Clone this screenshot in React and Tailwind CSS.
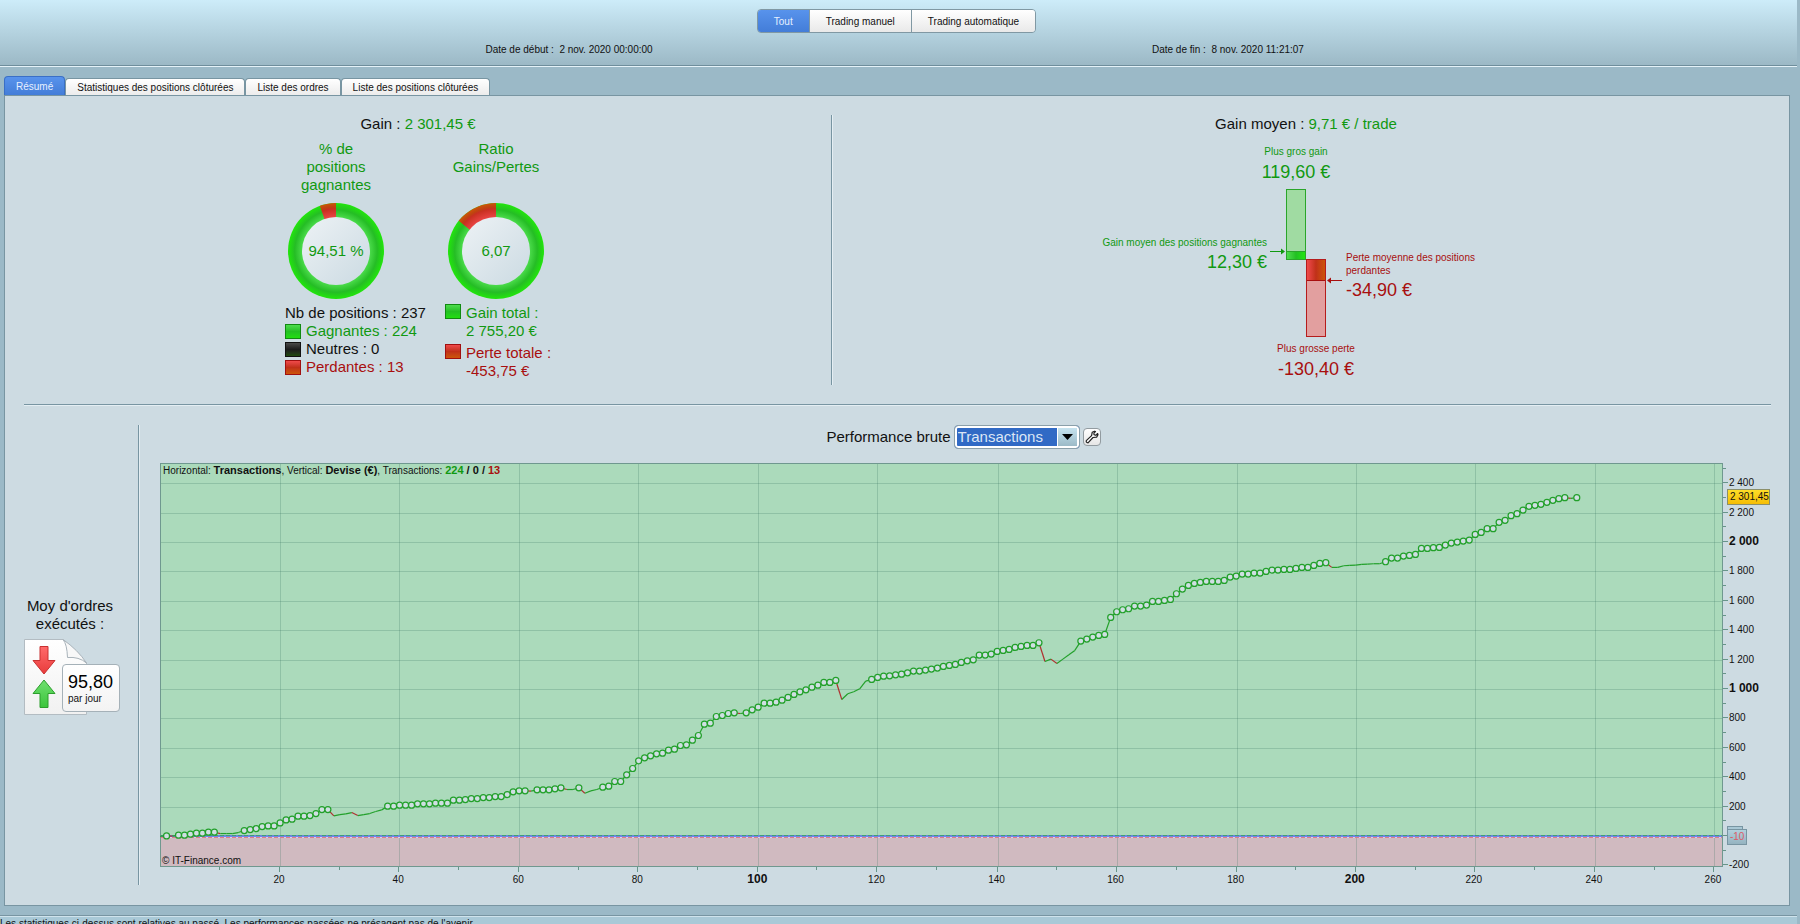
import { useState } from "react";
import clsx from "clsx";

// height of the equity curve after each transaction, in thirds of a pixel
const curve = [
  1, 0, 3, 3, 6, 9, 9, 12, 12, 8, 8, 8, 11, 17, 20, 23, 29, 31, 31, 40, 49, 51,
  60, 60, 62, 68, 80, 80, 61, 65, 67, 71, 62, 65, 68, 74, 79, 90, 90, 93, 93,
  93, 97, 97, 97, 99, 99, 99, 108, 108, 110, 113, 113, 116, 116, 119, 119, 125,
  133, 136, 136, 135, 139, 139, 139, 142, 145, 140, 140, 145, 129, 136, 140,
  147, 150, 164, 164, 184, 203, 226, 235, 241, 247, 249, 258, 261, 272, 274,
  288, 302, 336, 339, 359, 362, 368, 370, 368, 370, 379, 387, 399, 399, 402,
  408, 416, 425, 433, 439, 447, 453, 461, 461, 467, 410, 427, 433, 442, 465,
  470, 476, 480, 481, 484, 486, 490, 495, 495, 498, 501, 504, 509, 512, 515,
  521, 526, 529, 543, 543, 546, 554, 557, 560, 566, 569, 572, 572, 580, 524,
  531, 518, 531, 544, 557, 585, 591, 597, 602, 605, 656, 673, 679, 682, 690,
  690, 693, 704, 704, 707, 710, 727, 741, 752, 758, 761, 764, 764, 764, 767,
  777, 780, 786, 786, 789, 789, 794, 798, 798, 800, 800, 803, 806, 806, 812,
  818, 820, 806, 806, 811, 812, 813, 815, 816, 817, 817, 823, 834, 834, 840,
  842, 845, 863, 863, 865, 866, 873, 879, 882, 885, 888, 905, 911, 922, 922,
  941, 947, 961, 967, 978, 989, 992, 995, 1001, 1007, 1012, 1015, 1013, 1015,
];
// drawdowns: the curve is below its last high, no marker there
const drawdowns = [
  [2, 2],
  [10, 13],
  [29, 37],
  [62, 62],
  [68, 69],
  [71, 73],
  [97, 97],
  [114, 118],
  [148, 153],
  [196, 204],
  [236, 236],
];
const isHigh = (n) => !drawdowns.some(([a, b]) => n >= a && n <= b);

const plot = { left: 10, top: 3, right: 1572, bottom: 407, zero: 376 };
const px = (n) => 130 + (n - 20) * 5.972;
const py = (v) => plot.zero - v * 0.147;
const points = curve.map((h, i) => ({
  n: i + 1,
  x: px(i + 1),
  y: plot.zero - h / 3,
}));
const format = (v) => String(v).replace(/(\d)(\d{3})$/, "$1 $2");

const tabs = [
  "Résumé",
  "Statistiques des positions clôturées",
  "Liste des ordres",
  "Liste des positions clôturées",
];

export default function App() {
  return (
    <div className="flex flex-col h-screen overflow-hidden bg-[#9bb9c7] font-['Liberation_Sans',Arial,sans-serif] text-[10px] text-[#111]">
      <Header />
      <main className="flex flex-col pl-1 pr-[10px] pt-[9px]">
        <Tabs />
        <section className="border border-[#7895a2] bg-[#cddbe2] pb-5">
          <div className="flex pt-[19px]">
            <Gains />
            <div className="border-l border-[#7895a2] w-0.5 bg-[#e4eef3]"></div>
            <Average />
          </div>
          <hr className="mt-[19px] ml-[19px] mr-[18px] border-[#7895a2] shadow-[0_1px_0_#e4eef3]" />
          <div className="flex pt-5">
            <Orders />
            <div className="border-l border-[#7895a2] w-0.5 bg-[#e4eef3]"></div>
            <Performance />
          </div>
        </section>
      </main>
      <footer className="mt-[9px] mr-[3px] border-t border-[#7895a2] shadow-[inset_0_1px_0_#cfe3ec] bg-[#a9c9d7] pt-px whitespace-nowrap leading-[14px]">
        Les statistiques ci-dessus sont relatives au passé. Les performances
        passées ne présagent pas de l'avenir.
      </footer>
    </div>
  );
}

const Header = () => {
  const [mode, setMode] = useState("Tout");
  return (
    <header className="mr-[3px] pt-[9px] h-[67px] shrink-0 bg-linear-to-b from-[#cdecf9] to-[#9bb8c5] border-b border-[#e4f2f8] shadow-[inset_0_-1px_0_#6f8e9c]">
      <div className="flex justify-center pr-1">
        <div className="flex h-6 rounded-sm border border-[#8098a3] overflow-hidden">
          {["Tout", "Trading manuel", "Trading automatique"].map((item) => (
            <button
              key={item}
              className={clsx(
                "px-4 border-l border-[#8098a3] first:border-l-0",
                mode == item
                  ? "bg-linear-to-b from-[#5893ec] to-[#437dd8] text-[#e6f0ff]"
                  : "bg-linear-to-b from-white to-[#e9e9e9]",
              )}
              onClick={() => setMode(item)}
            >
              {item}
            </button>
          ))}
        </div>
      </div>
      <div className="grid grid-cols-2 w-11/15 mx-auto mt-[9px] text-center leading-4">
        <p>Date de début :&nbsp; 2 nov. 2020 00:00:00</p>
        <p>Date de fin :&nbsp; 8 nov. 2020 11:21:07</p>
      </div>
    </header>
  );
};

const Tabs = () => {
  const [tab, setTab] = useState(tabs[0]);
  return (
    <nav className="flex items-end">
      {tabs.map((item) => (
        <button
          key={item}
          className={clsx(
            "px-[11px] rounded-t-sm border border-b-0",
            tab == item
              ? "h-[19px] border-[#3a6fc6] bg-linear-to-b from-[#5893ec] to-[#437dd8] text-[#e6f0ff]"
              : "h-[17px] border-[#7895a2] bg-linear-to-b from-white to-[#ececec]",
          )}
          onClick={() => setTab(item)}
        >
          {item}
        </button>
      ))}
    </nav>
  );
};

const Swatch = ({ color }) => (
  <span
    className={clsx(
      "w-4 h-[15px] shrink-0 border",
      color == "green" &&
        "border-[#118a11] bg-linear-to-b from-[#4ddc4d] via-[#22c022] to-[#22dd10]",
      color == "black" &&
        "border-[#111] bg-linear-to-b from-[#4a4a4a] via-[#1c1c1c] to-[#1f4a0c]",
      color == "red" &&
        "border-[#a01010] bg-linear-to-b from-[#f04a4a] via-[#c03018] to-[#cc5508]",
    )}
  ></span>
);

const Donut = ({ id, loss, label }) => {
  const angle = loss * 2 * Math.PI;
  const x = 49 - 60 * Math.sin(angle);
  const y = 49 - 60 * Math.cos(angle);
  return (
    <svg width="98" height="98" viewBox="0 0 98 98">
      <defs>
        <radialGradient id={`${id}-win`} gradientUnits="userSpaceOnUse" cx="49" cy="49" r="48">
          <stop offset="0.7" stopColor="#4cdc4c" />
          <stop offset="0.86" stopColor="#25bd25" />
          <stop offset="1" stopColor="#22e60c" />
        </radialGradient>
        <radialGradient id={`${id}-loss`} gradientUnits="userSpaceOnUse" cx="49" cy="49" r="48">
          <stop offset="0.7" stopColor="#ea4545" />
          <stop offset="0.88" stopColor="#c83020" />
          <stop offset="0.92" stopColor="#bf4210" />
          <stop offset="1" stopColor="#cc5508" />
        </radialGradient>
        <linearGradient id={`${id}-hole`} x1="0" y1="0" x2="1" y2="1">
          <stop offset="0" stopColor="#edf2f5" />
          <stop offset="1" stopColor="#cbdae2" />
        </linearGradient>
        <clipPath id={`${id}-clip`}>
          <path d={`M49 49V-11L${x} ${y}Z`} />
        </clipPath>
      </defs>
      <circle cx="49" cy="49" r="48" fill={`url(#${id}-win)`} />
      <circle cx="49" cy="49" r="48" fill={`url(#${id}-loss)`} clipPath={`url(#${id}-clip)`} />
      <circle cx="49" cy="49" r="34" fill={`url(#${id}-hole)`} />
      <text x="49" y="54" textAnchor="middle" fontSize="15" fill="#119911">
        {label}
      </text>
    </svg>
  );
};

const Gains = () => (
  <article className="w-[826px] shrink flex flex-col items-center text-[15px] leading-[18px]">
    <h2>
      Gain : <span className="text-[#119911]">2 301,45 €</span>
    </h2>
    <div className="flex mt-[7px] pr-1">
      <div className="w-40 flex flex-col items-center">
        <h3 className="h-[62px] w-20 text-center text-[#119911]">
          % de positions gagnantes
        </h3>
        <Donut id="positions" loss={0.0549} label="94,51 %" />
        <ul className="mt-1 ml-[58px] w-40 whitespace-nowrap">
          <li>Nb de positions : 237</li>
          <li className="flex items-center gap-[5px] text-[#119911]">
            <Swatch color="green" /> Gagnantes : 224
          </li>
          <li className="flex items-center gap-[5px]">
            <Swatch color="black" /> Neutres : 0
          </li>
          <li className="flex items-center gap-[5px] text-[#a80f0f]">
            <Swatch color="red" /> Perdantes : 13
          </li>
        </ul>
      </div>
      <div className="w-40 flex flex-col items-center">
        <h3 className="h-[62px] text-center text-[#119911]">
          Ratio
          <br />
          Gains/Pertes
        </h3>
        <Donut id="ratio" loss={0.1415} label="6,07" />
        <ul className="mt-1 ml-[58px] w-40 space-y-1">
          <li className="flex gap-[5px] text-[#119911]">
            <Swatch color="green" />
            <span>
              Gain total :<br />2 755,20 €
            </span>
          </li>
          <li className="flex gap-[5px] text-[#a80f0f]">
            <Swatch color="red" />
            <span>
              Perte totale :<br />
              -453,75 €
            </span>
          </li>
        </ul>
      </div>
    </div>
  </article>
);

const Average = () => (
  <article className="flex-1 flex flex-col items-center pr-[10px] pb-[3px]">
    <h2 className="text-[15px] leading-[18px]">
      Gain moyen : <span className="text-[#119911]">9,71 € / trade</span>
    </h2>
    <div className="grid grid-cols-[1fr_20px_20px_1fr] mt-3 whitespace-nowrap">
      <div className="flex justify-end gap-[3px] pt-[91px] text-right text-[#119911]">
        <div>
          <p className="leading-[14px]">Gain moyen des positions gagnantes</p>
          <p className="text-lg leading-6">12,30 €</p>
        </div>
        <svg width="15" height="7" viewBox="0 0 15 7" className="mt-3 mr-px">
          <path d="M0 3.5H12" stroke="#119911" />
          <path d="M11 0.5L15 3.5L11 6.5Z" fill="#119911" />
        </svg>
      </div>
      <div className="flex flex-col items-center text-[#119911]">
        <p className="leading-[14px]">Plus gros gain</p>
        <p className="text-lg leading-[26px] mb-1">119,60 €</p>
        <div className="w-5 h-[71px] flex flex-col border border-[#2aa52a] bg-[#a0dba2]">
          <div className="h-2 mt-auto border-t border-[#2aa52a] bg-linear-to-r from-[#4ddc4d] via-[#22c022] to-[#22e60c]"></div>
        </div>
      </div>
      <div className="flex flex-col items-center pt-[114px] text-[#a80f0f]">
        <div className="w-5 h-[78px] border border-[#b51c1c] bg-[#e29f9f]">
          <div className="h-[21px] border-b border-[#a80f0f] bg-linear-to-r from-[#f04a4a] via-[#c03018] to-[#cc5508]"></div>
        </div>
        <p className="leading-[14px] mt-[5px]">Plus grosse perte</p>
        <p className="text-lg leading-[26px]">-130,40 €</p>
      </div>
      <div className="flex gap-1 pt-[106px] text-[#a80f0f]">
        <svg width="15" height="7" viewBox="0 0 15 7" className="mt-[26px] ml-px">
          <path d="M3 3.5H15" stroke="#a80f0f" />
          <path d="M4 0.5L0 3.5L4 6.5Z" fill="#a80f0f" />
        </svg>
        <div>
          <p className="leading-[13px]">
            Perte moyenne des positions
            <br />
            perdantes
          </p>
          <p className="text-lg leading-[26px]">-34,90 €</p>
        </div>
      </div>
    </div>
  </article>
);

const Orders = () => (
  <article className="w-[133px] shrink-0 flex flex-col justify-center pl-[19px] pb-[38px] pt-10">
    <h2 className="w-[92px] text-center text-[15px] leading-[18px]">
      Moy d'ordres exécutés :
    </h2>
    <div className="relative mt-[6px] h-[76px]">
      <svg width="64" height="76" viewBox="0 0 64 76">
        <defs>
          <linearGradient id="sheet" x1="0" y1="0" x2="0" y2="1">
            <stop offset="0" stopColor="#ffffff" />
            <stop offset="1" stopColor="#f1f1f1" />
          </linearGradient>
          <linearGradient id="down" x1="0" y1="0" x2="0" y2="1">
            <stop offset="0" stopColor="#ff6a6a" />
            <stop offset="1" stopColor="#e83c3c" />
          </linearGradient>
          <linearGradient id="up" x1="0" y1="0" x2="0" y2="1">
            <stop offset="0" stopColor="#6fe06f" />
            <stop offset="1" stopColor="#3cc43c" />
          </linearGradient>
        </defs>
        <path d="M0.5 0.5H39L62.5 24V75.5H0.5Z" fill="url(#sheet)" stroke="#b3bcc2" />
        <path d="M39 0.5Q43 5 43.5 18.5Q55 17.5 62.5 24Q54 11 39 0.5Z" fill="#f8f8f8" stroke="#a9b3ba" />
        <path d="M16 7.5H24V21.5H31L20 35L9 21.5H16Z" fill="url(#down)" stroke="#c93030" />
        <path d="M20 41L31 54.5H24V68.5H16V54.5H9Z" fill="url(#up)" stroke="#2d9e2d" />
      </svg>
      <div className="absolute left-[38px] top-[25px] w-[58px] h-12 pl-[5px] pt-2 rounded-sm border border-[#a5b1b8] bg-linear-to-b from-white to-[#f3f3f3]">
        <p className="text-lg leading-[18px] text-black">95,80</p>
        <p className="leading-4">par jour</p>
      </div>
    </div>
  </article>
);

const Performance = () => (
  <article className="flex-1 min-w-0 pl-[10px] pr-2">
    <div className="flex items-center justify-center pr-1 h-6 gap-[3px]">
      <label htmlFor="unit" className="text-[15px]">
        Performance brute
      </label>
      <div className="relative flex">
        <select
          id="unit"
          className="appearance-none w-[126px] h-6 rounded-sm border border-[#8ba0aa] bg-[#316ac5] text-[15px] leading-[18px] pl-[3px] text-[#dce6f5] outline-none shadow-[inset_0_0_0_2px_white]"
        >
          <option>Transactions</option>
          <option>Jours</option>
        </select>
        <span className="pointer-events-none absolute right-[3px] top-[3px] w-5 h-[18px] flex items-center justify-center border-l border-white bg-linear-to-b from-[#c6e3ef] to-[#9cbac7]">
          <svg width="11" height="6" viewBox="0 0 11 6">
            <path d="M0 0H11L5.5 6Z" fill="#000" />
          </svg>
        </span>
      </div>
      <button
        aria-label="Configurer"
        className="w-[18px] h-[18px] flex items-center justify-center rounded-sm border border-[#929ba0] bg-linear-to-b from-white to-[#e6e6e6]"
      >
        <svg width="14" height="14" viewBox="0 0 14 14">
          <path
            d="M9.5 1.2L7.2 2.3L6.6 5.6L1.3 10.6Q0.8 12.7 3 12.8L8 7.5L11.6 7.2L13 4.6L12.6 3.5L10.8 5.3L9 4.6L8.9 3.2L10.5 1.6Z"
            fill="#fff"
            stroke="#222"
            strokeWidth="1.2"
            strokeLinejoin="round"
          />
        </svg>
      </button>
    </div>
    <Chart />
  </article>
);

const Chart = () => {
  const { left, top, right, bottom, zero } = plot;
  const columns = Array.from({ length: 13 }, (_, i) => (i + 1) * 20);
  const rows = Array.from({ length: 14 }, (_, i) => i * 200 - 200);
  return (
    <svg viewBox="0 0 1630 425" className="block w-full h-auto mt-[11px]" fontSize="10" fill="#111">
      <defs>
        <linearGradient id="price" x1="0" y1="0" x2="0" y2="1">
          <stop offset="0" stopColor="#ffe02a" />
          <stop offset="1" stopColor="#f5bd05" />
        </linearGradient>
        <linearGradient id="cursor" x1="0" y1="0" x2="0" y2="1">
          <stop offset="0" stopColor="#b4d2de" />
          <stop offset="1" stopColor="#94b3c0" />
        </linearGradient>
      </defs>
      <g shapeRendering="crispEdges">
        <rect x={left} y={top} width={right - left} height={zero - top} fill="#abdabb" />
        <rect x={left} y={zero} width={right - left} height={bottom - zero} fill="#d0bac0" />
        {columns.map((n) => (
          <g key={n} stroke="#3c7864">
            <path d={`M${Math.round(px(n)) + 0.5} ${top}V${bottom}`} strokeOpacity="0.25" />
            <path d={`M${Math.round(px(n)) - 0.5} ${bottom}v5`} strokeOpacity="0.7" />
            <path d={`M${Math.round(px(n - 10)) - 0.5} ${bottom}v3`} strokeOpacity="0.7" />
          </g>
        ))}
        {rows.map((v) => (
          <g key={v} stroke="#3c7864">
            {v > 0 && (
              <path d={`M${left} ${Math.round(py(v)) + 0.5}H${right}`} strokeOpacity="0.25" />
            )}
            <path d={`M${right} ${Math.round(py(v)) - 0.5}h5`} strokeOpacity="0.7" />
            <path d={`M${right} ${Math.round(py(v + 100)) - 0.5}h3`} strokeOpacity="0.7" />
          </g>
        ))}
        <path d={`M${left} ${zero + 0.5}H${right}`} stroke="#7088e6" />
        <path d={`M${left} ${zero - 0.5}H${right}`} stroke="#6a80e0" />
        <path d={`M${left} ${zero - 0.5}H${right}`} stroke="#3f9f78" strokeDasharray="4 2" />
        <path d={`M${left} ${zero + 1.5}H${right}`} stroke="#d3d3ee" />
        <path d={`M${left} ${zero + 1.5}H${right}`} stroke="#e07c88" strokeDasharray="4 2" />
        <rect x={left + 0.5} y={top + 0.5} width={right - left - 1} height={bottom - top - 1} fill="none" stroke="#6f988f" />
      </g>

      {points.slice(1).map((p, i) => (
        <path
          key={p.n}
          d={`M${points[i].x} ${points[i].y}L${p.x} ${p.y}`}
          stroke={p.y > points[i].y ? "#b03030" : "#22a02a"}
          strokeWidth="1.2"
        />
      ))}
      <path d={`M${left} ${zero}H${px(1)}`} stroke="#22a02a" />
      {points
        .filter((p) => isHigh(p.n))
        .map((p) => (
          <circle key={p.n} cx={p.x} cy={p.y} r="3" fill="#cfdfe2" stroke="#22a02a" strokeWidth="1.2" />
        ))}

      <text x="13" y="14">
        Horizontal: <tspan fontWeight="bold" fontSize="11">Transactions</tspan>, Vertical:{" "}
        <tspan fontWeight="bold" fontSize="11">Devise (€)</tspan>, Transactions:{" "}
        <tspan fontWeight="bold" fontSize="11" fill="#119911">224</tspan>
        <tspan fontWeight="bold" fontSize="11"> / 0 / </tspan>
        <tspan fontWeight="bold" fontSize="11" fill="#a80f0f">13</tspan>
      </text>
      <text x="12" y="404">© IT-Finance.com</text>

      {columns.map((n) => (
        <text
          key={n}
          x={Math.round(px(n)) - 1}
          y="423"
          textAnchor="middle"
          fontWeight={n % 100 ? "normal" : "bold"}
          fontSize={n % 100 ? 10 : 12}
        >
          {n}
        </text>
      ))}
      {rows
        .filter((v) => v != 0)
        .map((v) => (
          <text
            key={v}
            x="1578"
            y={Math.round(py(v)) + 3}
            fontWeight={v % 1000 ? "normal" : "bold"}
            fontSize={v % 1000 ? 10 : 12}
          >
            {format(v)}
          </text>
        ))}
      <rect x="1577" y="29" width="42" height="15" fill="url(#price)" stroke="#8b8f6a" shapeRendering="crispEdges" />
      <text x="1579" y="40">2 301,45</text>
      <g shapeRendering="crispEdges" stroke="#7895a2">
        <rect x="1577" y="366" width="15" height="10" fill="#a9c8d5" />
        <rect x="1577" y="369" width="19" height="15" fill="url(#cursor)" />
      </g>
      <text x="1579" y="380" fill="#dc5b66">-10</text>
    </svg>
  );
};
